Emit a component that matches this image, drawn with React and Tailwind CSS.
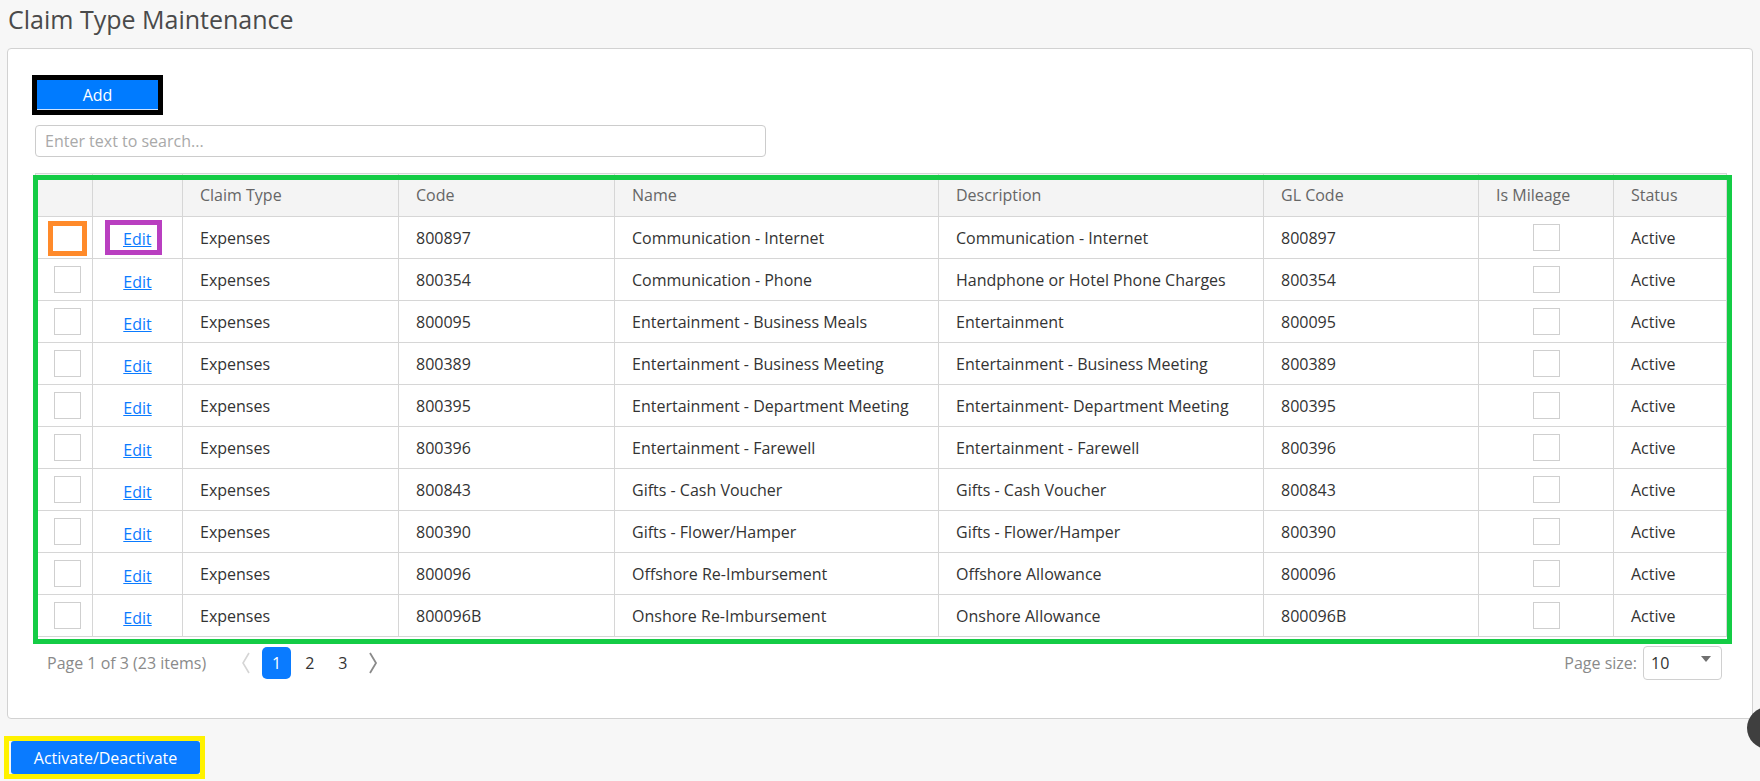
import React from 'react';

const rows = [
  ['800897', 'Communication - Internet', 'Communication - Internet', '800897'],
  ['800354', 'Communication - Phone', 'Handphone or Hotel Phone Charges', '800354'],
  ['800095', 'Entertainment - Business Meals', 'Entertainment', '800095'],
  ['800389', 'Entertainment - Business Meeting', 'Entertainment - Business Meeting', '800389'],
  ['800395', 'Entertainment - Department Meeting', 'Entertainment- Department Meeting', '800395'],
  ['800396', 'Entertainment - Farewell', 'Entertainment - Farewell', '800396'],
  ['800843', 'Gifts - Cash Voucher', 'Gifts - Cash Voucher', '800843'],
  ['800390', 'Gifts - Flower/Hamper', 'Gifts - Flower/Hamper', '800390'],
  ['800096', 'Offshore Re-Imbursement', 'Offshore Allowance', '800096'],
  ['800096B', 'Onshore Re-Imbursement', 'Onshore Allowance', '800096B'],
];

const Box = () => <span className="block w-[27px] h-[27px] border border-[#cfcfcf] bg-white" />;

const App = () => {
  return (
    <div className="w-[1760px] h-[781px] bg-[#f7f7f7] overflow-hidden relative text-[#333]" style={{ fontFamily: '"Open Sans", "Noto Sans", sans-serif' }}>
      <div className="h-[48px] pl-[8px] pt-[1px] text-[25px] leading-[36px] text-[#4a4a4a]">Claim Type Maintenance</div>

      <div className="mx-[7px] h-[671px] bg-white border border-[#d2d2d2] rounded-[4px] pt-[26px]">
        <div className="pl-[24px]">
          <div className="inline-block border-[5px] border-black">
            <button className="block w-[121px] h-[30px] bg-[#007bff] text-white text-[16px] border-b border-[#cfe3ff]">Add</button>
          </div>
        </div>

        <div className="ml-[27px] mt-[10px] w-[731px] h-[32px] border border-[#cccccc] rounded-[4px] flex items-center pl-[9px] text-[16px] text-[#a9a9a9]">
          Enter text to search...
        </div>

        <div className="relative ml-[27px] mt-[16px] w-[1691px]">
          <table className="w-full table-fixed border-collapse text-[16px]">
            <colgroup>
              <col className="w-[57px]" />
              <col className="w-[90px]" />
              <col className="w-[216px]" />
              <col className="w-[216px]" />
              <col className="w-[324px]" />
              <col className="w-[325px]" />
              <col className="w-[215px]" />
              <col className="w-[135px]" />
              <col className="w-[113px]" />
            </colgroup>
            <thead>
              <tr className="h-[43px] bg-[#f4f4f4] text-[#666]">
                <th className="border border-[#d6d6d6]"></th>
                <th className="border border-[#d6d6d6]"></th>
                <th className="border border-[#d6d6d6] text-left font-normal pl-[17px]">Claim Type</th>
                <th className="border border-[#d6d6d6] text-left font-normal pl-[17px]">Code</th>
                <th className="border border-[#d6d6d6] text-left font-normal pl-[17px]">Name</th>
                <th className="border border-[#d6d6d6] text-left font-normal pl-[17px]">Description</th>
                <th className="border border-[#d6d6d6] text-left font-normal pl-[17px]">GL Code</th>
                <th className="border border-[#d6d6d6] text-left font-normal pl-[17px]">Is Mileage</th>
                <th className="border border-[#d6d6d6] text-left font-normal pl-[17px]">Status</th>
              </tr>
            </thead>
            <tbody>
              {rows.map((r, i) => (
                <tr key={r[0]} className="h-[42px]">
                  <td className="border border-[#d6d6d6]">
                    {i === 0 ? (
                      <span className="block ml-[12px] w-[39px] h-[35px] border-[5px] border-[#ff8a2a] mt-[1px]">
                        <span className="block w-[29px] h-[25px] bg-white" />
                      </span>
                    ) : (
                      <span className="block pl-[18px]"><Box /></span>
                    )}
                  </td>
                  <td className="border border-[#d6d6d6] text-center">
                    {i === 0 ? (
                      <span className="block ml-[12px] w-[57px] h-[35px] border-[5px] border-[#b93fc0] pt-[2px] pl-[13px] text-left">
                        <a className="text-[#0a7bff] underline leading-[22px]">Edit</a>
                      </span>
                    ) : (
                      <a className="text-[#0a7bff] underline relative top-[2px]">Edit</a>
                    )}
                  </td>
                  <td className="border border-[#d6d6d6] pl-[17px]">Expenses</td>
                  <td className="border border-[#d6d6d6] pl-[17px]">{r[0]}</td>
                  <td className="border border-[#d6d6d6] pl-[17px] whitespace-nowrap">{r[1]}</td>
                  <td className="border border-[#d6d6d6] pl-[17px] whitespace-nowrap">{r[2]}</td>
                  <td className="border border-[#d6d6d6] pl-[17px]">{r[3]}</td>
                  <td className="border border-[#d6d6d6]"><span className="flex justify-center"><Box /></span></td>
                  <td className="border border-[#d6d6d6] pl-[17px]">Active</td>
                </tr>
              ))}
            </tbody>
          </table>
          <div className="absolute left-[-2px] top-[2px] right-[-6px] bottom-[-7px] border-[5px] border-[#14cc45] pointer-events-none" />
        </div>

        <div className="flex items-center mt-[9px] ml-[39px] mr-[30px] h-[34px] text-[16px]">
          <span className="text-[#8a8a8a]">Page 1 of 3 (23 items)</span>
          <svg className="ml-[35px]" width="10" height="22" viewBox="0 0 10 22"><path d="M8 1 L2 11 L8 21" fill="none" stroke="#d5d5d5" strokeWidth="1.6" /></svg>
          <span className="ml-[11px] w-[29px] h-[32px] rounded-[5px] bg-[#0a7bff] text-white flex items-center justify-center">1</span>
          <span className="ml-[14px] text-[#333]">2</span>
          <span className="ml-[24px] text-[#333]">3</span>
          <svg className="ml-[21px]" width="10" height="22" viewBox="0 0 10 22"><path d="M2 1 L8 11 L2 21" fill="none" stroke="#8a8a8a" strokeWidth="1.8" /></svg>
          <span className="ml-auto text-[#8a8a8a]">Page size:</span>
          <div className="ml-[6px] w-[79px] h-[34px] border border-[#d0d0d0] rounded-[4px] flex items-center pl-[7px] pr-[10px]">
            <span className="text-[#333]">10</span>
            <svg className="ml-auto -mt-[8px]" width="10" height="6" viewBox="0 0 10 6"><path d="M0 0 L10 0 L5 6 Z" fill="#707070" /></svg>
          </div>
        </div>
      </div>

      <div className="mt-[17px] ml-[4px] inline-block border-[5px] border-[#fff200] pl-[2px]">
        <button className="block w-[189px] h-[33px] bg-[#0a7bff] text-white text-[16px] rounded-[3px]">Activate/Deactivate</button>
      </div>

      <div className="absolute left-[1747px] top-[707px] w-[42px] h-[42px] rounded-full bg-[#3f3f3f]" />
    </div>
  );
};

export default App;
